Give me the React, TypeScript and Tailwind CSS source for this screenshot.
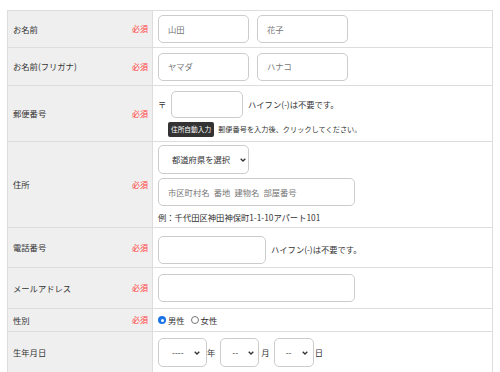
import React from "react"

const font = { fontFamily: '"Noto Sans CJK JP", "Noto Sans", sans-serif' }

function Req() {
  return <span className="text-[8px] text-[#ff3b3b]">必須</span>
}

function Label({ text, required = true }: { text: string; required?: boolean }) {
  return (
    <td className="w-[145px] bg-[#efefef] border border-[#dddddd] pl-[5px] pr-[4px] align-middle">
      <div className="flex items-center justify-between text-[8.3px] text-[#333]">
        <span>{text}</span>
        {required && <Req />}
      </div>
    </td>
  )
}

function Field({ placeholder = "", w }: { placeholder?: string; w: string }) {
  return (
    <div
      className={`${w} h-[28px] shrink-0 border border-[#cccccc] rounded-[5px] bg-white flex items-center pl-[9px] text-[8.3px] text-[#777] whitespace-pre`}
    >
      {placeholder}
    </div>
  )
}

function Chevron() {
  return (
    <svg width="6" height="4" viewBox="0 0 6 4" className="shrink-0">
      <path d="M0.7 0.7 L3 3 L5.3 0.7" fill="none" stroke="#333" strokeWidth="1.3" />
    </svg>
  )
}

function Select({ text, w, pl, gap }: { text: string; w: string; pl: string; gap: string }) {
  return (
    <div
      className={`${w} h-[29px] shrink-0 border border-[#cccccc] rounded-[5px] bg-white flex items-center ${pl} ${gap} text-[8.3px] text-[#333] whitespace-nowrap`}
    >
      <span>{text}</span>
      <Chevron />
    </div>
  )
}

function Radio({ checked }: { checked?: boolean }) {
  return (
    <span
      className={`inline-flex w-[8px] h-[8px] rounded-full items-center justify-center ${
        checked ? "bg-[#1a73e8]" : "border border-[#777] bg-white"
      }`}
    >
      {checked && <span className="w-[3px] h-[3px] rounded-full bg-white" />}
    </span>
  )
}

export default function App() {
  const cell = "border border-[#dddddd] pl-[5px] align-middle"
  return (
    <div className="w-[500px] h-[372px] bg-white overflow-hidden pt-[10px] pl-[7px]" style={font}>
      <table className="w-[486px] border-collapse">
        <tbody>
          <tr className="h-[37px]">
            <Label text="お名前" />
            <td className={cell}>
              <div className="flex gap-[8px]">
                <Field placeholder="山田" w="w-[91px]" />
                <Field placeholder="花子" w="w-[91px]" />
              </div>
            </td>
          </tr>
          <tr className="h-[38px]">
            <Label text="お名前(フリガナ)" />
            <td className={cell}>
              <div className="flex gap-[8px]">
                <Field placeholder="ヤマダ" w="w-[91px]" />
                <Field placeholder="ハナコ" w="w-[91px]" />
              </div>
            </td>
          </tr>
          <tr className="h-[56px]">
            <Label text="郵便番号" />
            <td className={cell}>
              <div className="flex flex-col gap-[4px] pt-[1px]">
                <div className="flex items-center text-[8.3px] text-[#333]">
                  <span className="w-[13px]">〒</span>
                  <div className="w-[72px] h-[27px] border border-[#cccccc] rounded-[5px] bg-white" />
                  <span className="ml-[5px]">ハイフン(-)は不要です。</span>
                </div>
                <div className="flex items-center gap-[4px] pl-[10px]">
                  <span className="h-[15px] px-[3px] bg-[#333] text-white text-[6.7px] flex items-center rounded-[2px]">
                    住所自動入力
                  </span>
                  <span className="text-[7.2px] text-[#333]">郵便番号を入力後、クリックしてください。</span>
                </div>
              </div>
            </td>
          </tr>
          <tr className="h-[86px]">
            <Label text="住所" />
            <td className={cell}>
              <div className="flex flex-col gap-[4px]">
                <Select text="都道府県を選択" w="w-[91px]" pl="pl-[13px]" gap="gap-[10px]" />
                <Field placeholder={"市区町村名\u2002番地\u2002建物名\u2002部屋番号"} w="w-[197px]" />
                <span className="text-[8.3px] text-[#333] leading-[14px]">例：千代田区神田神保町1-1-10アパート101</span>
              </div>
            </td>
          </tr>
          <tr className="h-[40px]">
            <Label text="電話番号" />
            <td className={cell}>
              <div className="flex items-center pt-[4px]">
                <Field w="w-[108px]" />
                <span className="ml-[5px] text-[8.3px] text-[#333]">ハイフン(-)は不要です。</span>
              </div>
            </td>
          </tr>
          <tr className="h-[41px]">
            <Label text="メールアドレス" />
            <td className={cell}>
              <Field w="w-[197px]" />
            </td>
          </tr>
          <tr className="h-[23px]">
            <Label text="性別" />
            <td className={cell}>
              <div className="flex items-center gap-[2px] text-[8.3px] text-[#333]">
                <Radio checked />
                <span className="mr-[4px]">男性</span>
                <Radio />
                <span>女性</span>
              </div>
            </td>
          </tr>
          <tr className="h-[42px]">
            <Label text="生年月日" required={false} />
            <td className={cell}>
              <div className="flex items-center text-[8.3px] text-[#333]">
                <Select text="----" w="w-[49px]" pl="pl-[13px]" gap="gap-[10px]" />
                <span className="mr-[5px]">年</span>
                <Select text="--" w="w-[39px]" pl="pl-[11px]" gap="gap-[10px]" />
                <span className="ml-[2px] mr-[4px]">月</span>
                <Select text="--" w="w-[40px]" pl="pl-[11px]" gap="gap-[11px]" />
                <span className="ml-[1px]">日</span>
              </div>
            </td>
          </tr>
        </tbody>
      </table>
    </div>
  )
}
